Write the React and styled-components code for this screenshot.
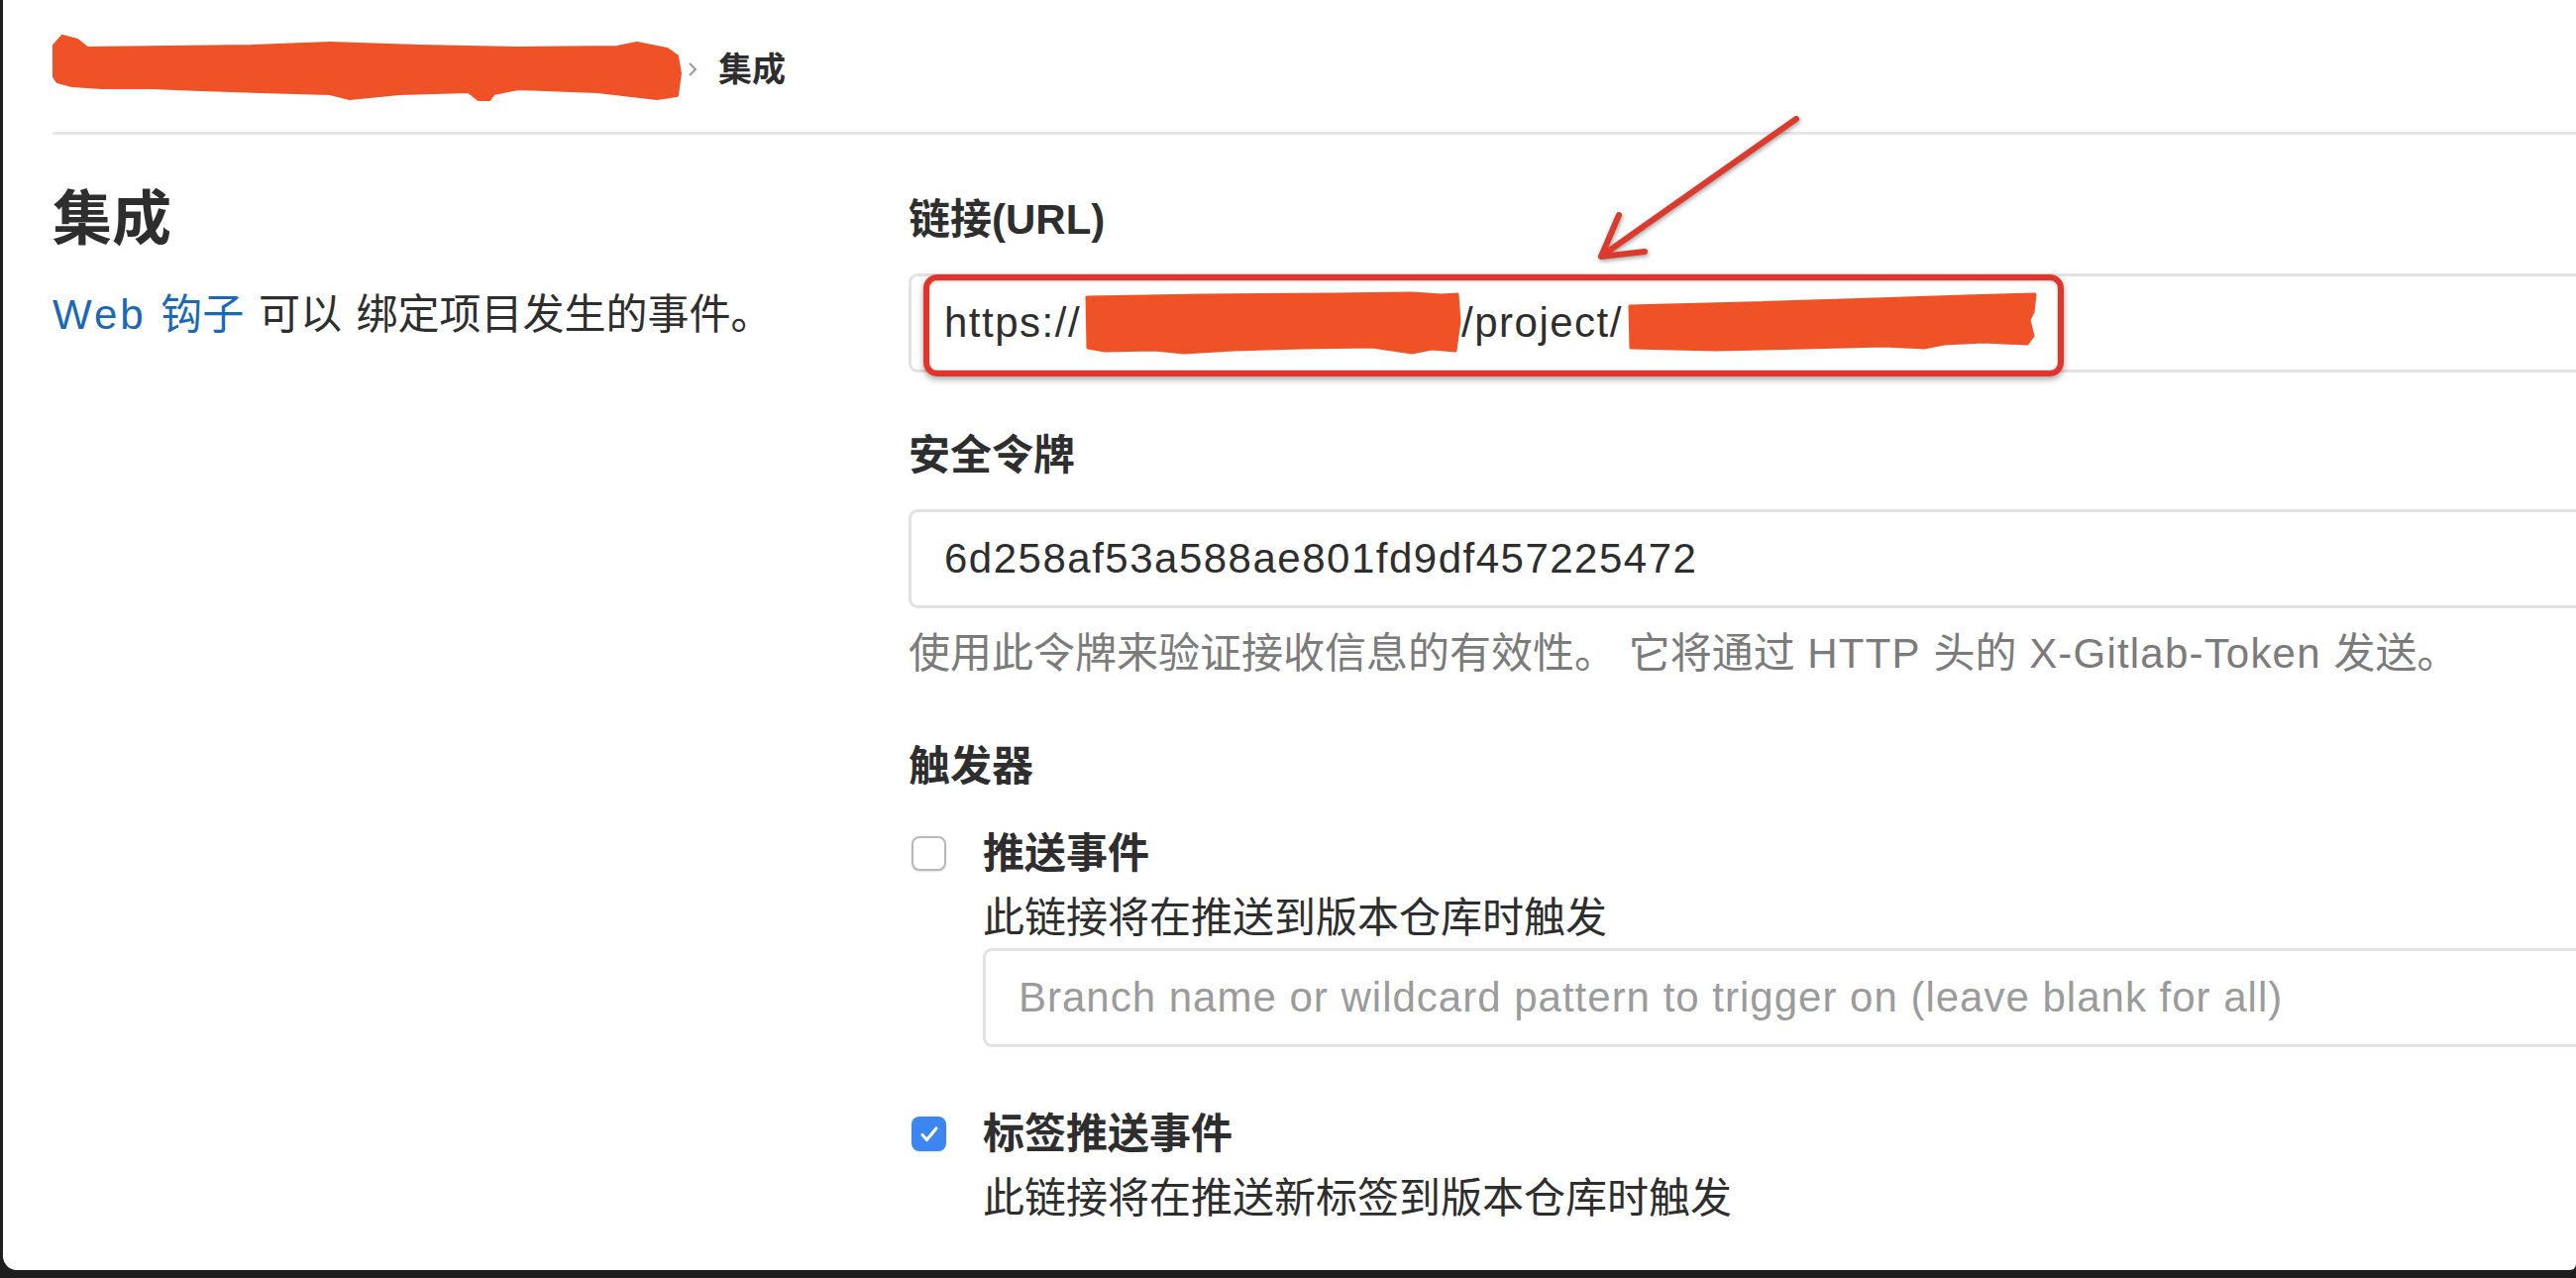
import React from 'react';
import styled, { createGlobalStyle } from 'styled-components';

const GlobalStyle = createGlobalStyle`
  html, body {
    margin: 0;
    padding: 0;
    background: #1e1e1e;
    overflow: hidden;
  }
  body {
    font-family: "Liberation Sans", "Noto Sans CJK SC", sans-serif;
    color: #2e2e2e;
  }
`;

const Screen = styled.div`
  width: 2600px;
  height: 1290px;
  background: #1e1e1e;
  display: flex;
`;

const Page = styled.div`
  flex: 1;
  margin: 0 0 8px 3px;
  background: #fff;
  border-bottom-left-radius: 14px;
  border-bottom-right-radius: 6px;
  overflow: hidden;
  padding-left: 50px;
`;

const Breadcrumbs = styled.div`
  height: 136px;
  display: flex;
  align-items: center;
  padding-top: 2px;
  box-sizing: border-box;
  border-bottom: 3px solid #e6e6e6;
`;

const Crumb = styled.span`
  font-size: 34px;
  font-weight: 700;
  color: #2e2e2e;
  margin-left: 20px;
`;

const Chevron = styled.svg`
  margin-left: 4px;
  margin-top: 4px;
`;

const Main = styled.div`
  display: grid;
  grid-template-columns: 864px 1fr;
`;

const Side = styled.div`
  padding-top: 50px;
`;

const SideTitle = styled.h4`
  margin: 0;
  font-size: 60px;
  line-height: 72px;
  font-weight: 700;
  color: #2e2e2e;
`;

const SideText = styled.p`
  margin: 30px 0 0;
  font-size: 42px;
  line-height: 60px;
  color: #2e2e2e;
  word-spacing: 3px;
`;

const Link = styled.a`
  color: #1b69b6;
  text-decoration: none;
`;

// latin runs are drawn a bit wider in the screenshot than in Liberation Sans
const Latin = styled.span`
  letter-spacing: ${(p) => p.$ls || 1.2}px;
`;

const Form = styled.div`
  position: relative;
  padding-top: 56px;
`;

const Group = styled.div`
  margin-bottom: 54px;
`;

const Label = styled.div`
  font-size: 42px;
  line-height: 60px;
  font-weight: 700;
  color: #2e2e2e;
  margin-bottom: ${(p) => p.$gap || 24}px;
`;

const Field = styled.div`
  box-sizing: border-box;
  width: calc(100% + 30px);
  height: 100px;
  border: 3px solid #e2e2e2;
  border-radius: 9px;
  padding: 0 33px;
  display: flex;
  align-items: center;
  font-size: 42px;
  letter-spacing: ${(p) => (p.$placeholder ? 1 : 1.5)}px;
  color: ${(p) => (p.$placeholder ? '#9b9b9b' : '#2e2e2e')};
  white-space: nowrap;
`;

const Help = styled.div`
  margin-top: 16px;
  font-size: 42px;
  line-height: 60px;
  color: #7b7b7b;
  word-spacing: 1px;
`;

const CheckRow = styled.div`
  display: grid;
  grid-template-columns: 75px 1fr;
  margin-bottom: ${(p) => p.$gap || 0}px;
`;

const Box = styled.span`
  box-sizing: border-box;
  width: 35px;
  height: 35px;
  margin: 12px 0 0 3px;
  border-radius: 8px;
  display: flex;
  align-items: center;
  justify-content: center;
  border: ${(p) => (p.$checked ? 'none' : '2px solid #b8b8b8')};
  background: ${(p) => (p.$checked ? '#3d85f0' : '#fff')};
  box-shadow: 0 1px 2px rgba(0, 0, 0, 0.12);
`;

const CheckTitle = styled.div`
  font-size: 42px;
  line-height: 60px;
  font-weight: 700;
  color: #2e2e2e;
`;

const CheckText = styled.div`
  margin-top: 5px;
  font-size: 42px;
  line-height: 60px;
  color: #2e2e2e;
`;

const Scribble = styled.svg`
  display: block;
  flex-shrink: 0;
  margin-left: ${(p) => p.$ml || 0}px;
`;

const Highlight = styled.div`
  position: absolute;
  left: 15px;
  top: 141px;
  width: 1151px;
  height: 103px;
  box-sizing: border-box;
  border: 6px solid #e1352c;
  border-radius: 14px;
  box-shadow: 0 3px 6px rgba(0, 0, 0, 0.35), inset 0 1px 3px rgba(0, 0, 0, 0.25);
  pointer-events: none;
`;

const Arrow = styled.svg`
  position: absolute;
  left: 680px;
  top: -30px;
  overflow: visible;
  filter: drop-shadow(1px 2px 2px rgba(0, 0, 0, 0.35));
`;

const RED = '#ef5226';

const Check = () => (
  <svg width="22" height="22" viewBox="0 0 22 22">
    <path d="M4 11.5l4.5 5L18 5" fill="none" stroke="#fff" strokeWidth="3.2" strokeLinecap="round" strokeLinejoin="round" />
  </svg>
);

export default function App() {
  return (
    <Screen>
      <GlobalStyle />
      <Page>
        <Breadcrumbs>
          <Scribble width="636" height="68" viewBox="0 0 636 68">
            <path
              d="M2 12 L10 3 L25 7 L35 15 L200 13 L280 10 L370 13 L470 15 L570 14 L590 10 L620 16 L630 23 L633 40 L630 62 L610 65 L550 58 L470 55 L445 60 L440 67 L430 66 L420 58 L350 60 L300 65 L280 60 L210 58 L150 56 L100 54 L50 54 L20 52 L5 48 L0 40 Z"
              fill={RED}
              stroke={RED}
              strokeWidth="4"
              strokeLinejoin="round"
            />
          </Scribble>
          <Chevron width="12" height="18" viewBox="0 0 12 18">
            <path d="M3 3l6 6-6 6" fill="none" stroke="#9a9a9a" strokeWidth="2" />
          </Chevron>
          <Crumb>集成</Crumb>
        </Breadcrumbs>

        <Main>
          <Side>
            <SideTitle>集成</SideTitle>
            <SideText>
              <Link><Latin $ls={3}>Web</Latin> 钩子</Link> 可以 绑定项目发生的事件。
            </SideText>
          </Side>

          <Form>
            <Group>
              <Label>链接(URL)</Label>
              <Field>
                https://
                <Scribble $ml={4} width="380" height="64" viewBox="0 0 380 64">
                  <path
                    d="M2 6 L120 4 L250 3 L330 2 L360 4 L376 3 L378 30 L374 60 L350 58 L330 62 L290 56 L220 57 L150 59 L100 62 L70 59 L20 60 L3 57 Z"
                    fill={RED}
                    stroke={RED}
                    strokeWidth="3"
                    strokeLinejoin="round"
                  />
                </Scribble>
                /project/
                <Scribble $ml={4} width="418" height="62" viewBox="0 0 418 62">
                  <path
                    d="M3 14 L120 11 L250 7 L340 4 L412 2 L410 20 L406 28 L410 44 L404 52 L360 50 L320 52 L300 56 L260 54 L180 56 L90 58 L4 56 Z"
                    fill={RED}
                    stroke={RED}
                    strokeWidth="3"
                    strokeLinejoin="round"
                  />
                </Scribble>
              </Field>
            </Group>

            <Group>
              <Label>安全令牌</Label>
              <Field>6d258af53a588ae801fd9df457225472</Field>
              <Help>
                使用此令牌来验证接收信息的有效性。 它将通过 <Latin>HTTP</Latin> 头的 <Latin>X-Gitlab-Token</Latin> 发送。
              </Help>
            </Group>

            <Label $gap={28}>触发器</Label>

            <CheckRow $gap={58}>
              <Box />
              <div>
                <CheckTitle>推送事件</CheckTitle>
                <CheckText>此链接将在推送到版本仓库时触发</CheckText>
                <Field $placeholder>Branch name or wildcard pattern to trigger on (leave blank for all)</Field>
              </div>
            </CheckRow>

            <CheckRow>
              <Box $checked>
                <Check />
              </Box>
              <div>
                <CheckTitle>标签推送事件</CheckTitle>
                <CheckText>此链接将在推送新标签到版本仓库时触发</CheckText>
              </div>
            </CheckRow>

            <Highlight />
            <Arrow width="240" height="170" viewBox="0 0 240 170">
              <path d="M216 14 L20 152" fill="none" stroke="#dd3a2e" strokeWidth="6" strokeLinecap="round" />
              <path d="M37 111 L19 153 L63 148" fill="none" stroke="#dd3a2e" strokeWidth="6" strokeLinecap="round" strokeLinejoin="round" />
            </Arrow>
          </Form>
        </Main>
      </Page>
    </Screen>
  );
}
